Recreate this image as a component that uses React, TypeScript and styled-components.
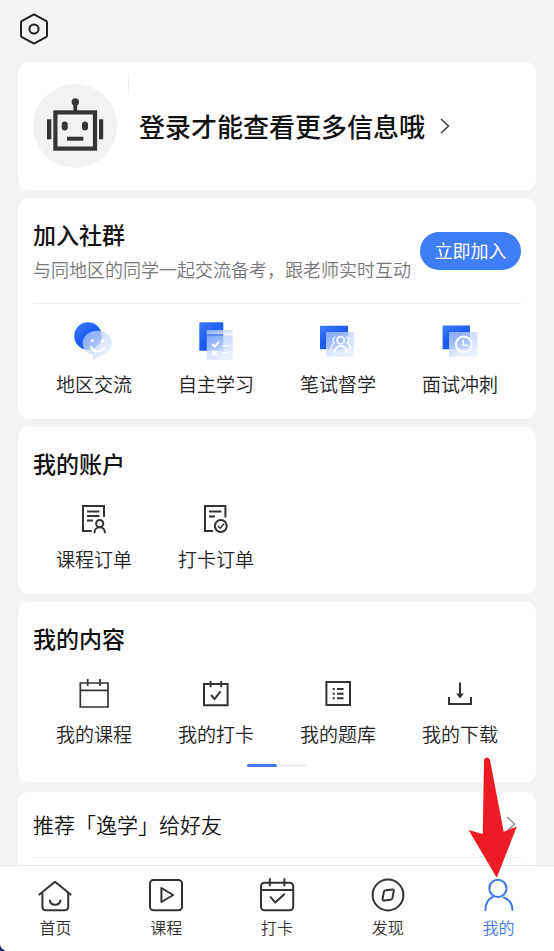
import React from "react";
import styled, { createGlobalStyle } from "styled-components";

const GlobalStyle = createGlobalStyle`
  * { box-sizing: border-box; }
  body {
    margin: 0;
    background: #16266e;
    font-family: "Noto Sans CJK SC", "Noto Sans", sans-serif;
    color: #333;
  }
  a { color: inherit; text-decoration: none; }
  h2, p { margin: 0; }
  svg { display: block; flex: none; }
`;

const Screen = styled.div`
  display: flex;
  flex-direction: column;
  height: 100vh;
  background: #f3f3f3;
  border-bottom-left-radius: 8px;
  overflow: hidden;
`;

const TopBar = styled.header`
  flex: none;
  padding: 12px 17px 16px;
`;

const IconButton = styled.button`
  display: block;
  padding: 0;
  border: 0;
  background: none;
  cursor: pointer;
`;

const Content = styled.main`
  flex: 1;
  min-height: 0;
  overflow: hidden;
  padding: 0 18px;
`;

const Card = styled.section<{ $top?: number; $bottom?: number }>`
  background: #fff;
  border-radius: 11px;
  padding: ${(p) => p.$top ?? 23}px 15px ${(p) => p.$bottom ?? 21}px;
  & + & { margin-top: 8px; }
`;

const ShareCard = styled(Card)`
  && { margin-top: 10px; }
`;

const Profile = styled.a`
  display: flex;
  align-items: center;
  height: 128px;
`;

const Avatar = styled.span`
  flex: none;
  width: 84px;
  height: 84px;
  border-radius: 50%;
  background: #f2f2f4;
`;

const Hairline = styled.span`
  align-self: flex-start;
  width: 1px;
  height: 18px;
  margin: 13px 10px 0 11px;
  background: #f1f1f1;
`;

const LoginText = styled.span`
  font-size: 26px;
  line-height: 36px;
  font-weight: 500;
  color: #111;
  margin-right: 14px;
  white-space: nowrap;
`;

const Title = styled.h2`
  && { margin-bottom: 3px; }
  font-size: 23px;
  line-height: 26px;
  font-weight: 500;
  color: #111;
`;

const GroupHead = styled.div`
  display: flex;
  align-items: center;
  justify-content: space-between;
  padding-bottom: 22px;
  border-bottom: 1px solid #efefef;
`;

const Subtitle = styled.p`
  && { margin-top: 10px; }
  font-size: 18px;
  line-height: 24px;
  font-weight: 350;
  color: #777;
  white-space: nowrap;
`;

const JoinButton = styled.button`
  flex: none;
  width: 101px;
  height: 38px;
  padding: 0 0 2px;
  border: 0;
  border-radius: 19px;
  background: #3d7df6;
  color: #fff;
  font-family: inherit;
  font-size: 18px;
  line-height: 24px;
  cursor: pointer;
`;

const Grid = styled.div`
  display: grid;
  grid-template-columns: repeat(4, 1fr);
`;

const GridArea = styled.div`
  padding-top: 18px;
`;

const Cell = styled.a`
  display: flex;
  flex-direction: column;
  align-items: center;
  gap: 4px;
  font-size: 19px;
  line-height: 28px;
  font-weight: 350;
  color: #222;
  white-space: nowrap;
`;

const Pager = styled.div`
  width: 60px;
  height: 3px;
  margin: 16px auto 0;
  border-radius: 2px;
  background: #f0f0f1;
`;

const PagerThumb = styled.div`
  width: 50%;
  height: 100%;
  border-radius: 2px;
  background: #4279e3;
`;

const ListRow = styled.a`
  display: flex;
  align-items: center;
  justify-content: space-between;
  height: 66px;
  padding: 0 4px 2px 0;
  border-bottom: 1px solid #efefef;
  font-size: 21px;
  font-weight: 350;
  color: #111;
`;

const TabBar = styled.nav`
  flex: none;
  display: grid;
  grid-template-columns: repeat(5, 1fr);
  border-top: 1px solid #e8e8e8;
  background: #fff;
`;

const Tab = styled.a<{ $active?: boolean }>`
  position: relative;
  display: flex;
  flex-direction: column;
  align-items: center;
  gap: 2px;
  padding: 9px 0 14px;
  font-size: 16px;
  line-height: 20px;
  font-weight: 350;
  color: ${(p) => (p.$active ? "#4079e8" : "#333")};
`;

const Pointer = styled.svg`
  position: absolute;
  bottom: 72px;
  left: calc(50% - 31px);
  pointer-events: none;
`;

const LineSvg = styled.svg`
  fill: none;
  stroke: currentColor;
  stroke-width: 2;
`;

const DefsSvg = styled.svg`
  position: absolute;
`;

type IconProps = { children: React.ReactNode };

const CellIcon = ({ children }: IconProps) => (
  <LineSvg width="44" height="44" viewBox="0 0 44 44" color="#333" aria-hidden="true">{children}</LineSvg>
);

const TabIcon = ({ children }: IconProps) => (
  <LineSvg width="40" height="40" viewBox="0 0 40 40" strokeLinecap="round" strokeLinejoin="round" aria-hidden="true">
    {children}
  </LineSvg>
);

const Chevron = ({ color }: { color: string }) => (
  <svg width="12" height="20" viewBox="0 0 12 20" fill="none" stroke={color} strokeWidth="1.6" aria-hidden="true">
    <path d="M2 3L9.5 10L2 17" />
  </svg>
);

const Gradients = () => (
  <DefsSvg width="0" height="0" aria-hidden="true">
    <defs>
      <linearGradient id="solid" x1="0" y1="0" x2="0.7" y2="1">
        <stop offset="0" stopColor="#3f7ffa" />
        <stop offset="0.5" stopColor="#1f5ff3" />
        <stop offset="1" stopColor="#0b50f4" />
      </linearGradient>
      <linearGradient id="glass" x1="0" y1="0" x2="0.9" y2="1">
        <stop offset="0" stopColor="#9dbcfb" stopOpacity="0.75" />
        <stop offset="0.5" stopColor="#cfdefc" stopOpacity="0.8" />
        <stop offset="1" stopColor="#edf3fe" stopOpacity="0.95" />
      </linearGradient>
      <linearGradient id="pane" x1="0" y1="0" x2="0.5" y2="1">
        <stop offset="0" stopColor="#b4cbfc" stopOpacity="0.65" />
        <stop offset="0.6" stopColor="#cdddfd" stopOpacity="0.85" />
        <stop offset="1" stopColor="#e8f0fe" />
      </linearGradient>
    </defs>
  </DefsSvg>
);

const groupItems = [
  {
    label: "地区交流",
    icon: (
      <>
        <circle cx="16" cy="14" r="13.8" fill="url(#solid)" stroke="none" />
        <path d="M25.3 8.7C33.6 8.7 40 14.2 40 21.2C40 28 34.6 32.8 27.8 33.6L21.2 38L20.6 33C14.6 31.2 10.7 26.9 10.7 21.2C10.7 14.2 17 8.7 25.3 8.7Z" fill="url(#glass)" stroke="none" />
        <circle cx="20.3" cy="18.6" r="1.6" fill="#fff" stroke="none" />
        <circle cx="30.8" cy="18.6" r="1.6" fill="#fff" stroke="none" />
        <path d="M19 25C21.2 30.2 29 31 32.2 26" stroke="#fff" strokeLinecap="round" />
      </>
    ),
  },
  {
    label: "自主学习",
    icon: (
      <>
        <rect x="5.3" y="0.2" width="24" height="28.6" rx="0.6" fill="url(#solid)" stroke="none" />
        <rect x="12.7" y="8" width="26" height="4.4" fill="url(#glass)" stroke="none" />
        <rect x="12.7" y="13.4" width="26" height="24.6" fill="url(#pane)" stroke="none" />
        <path d="M18.3 22L20.8 24.6L25.2 19.7M18.2 28.8L22.8 33.2M22.8 28.8L18.2 33.2" stroke="#fff" />
        <path d="M28.3 23.6H35M28.3 30.8H35" stroke="#fff" strokeWidth="1.4" />
      </>
    ),
  },
  {
    label: "笔试督学",
    icon: (
      <>
        <rect x="4" y="3.7" width="28" height="23.6" rx="0.6" fill="url(#solid)" stroke="none" />
        <rect x="10" y="10" width="28" height="24.7" fill="url(#pane)" stroke="none" />
        <g stroke="#fff" strokeWidth="1.7">
          <circle cx="24.7" cy="18.2" r="3.6" />
          <path d="M18.4 31C18.4 21.6 31 21.6 31 31" />
          <path d="M19.4 14.8C16.4 15.2 16.2 19.6 18.4 21C16.2 22.2 15 24.6 15 28M30 14.8C33 15.2 33.2 19.6 31 21C33.2 22.2 34.4 24.6 34.4 28" strokeWidth="1.1" />
        </g>
      </>
    ),
  },
  {
    label: "面试冲刺",
    icon: (
      <>
        <rect x="4.6" y="3.4" width="27.4" height="23.8" rx="0.6" fill="url(#solid)" stroke="none" />
        <rect x="11" y="10" width="28.4" height="24.7" fill="url(#pane)" stroke="none" />
        <circle cx="25.7" cy="22.4" r="7.8" stroke="#fff" />
        <path d="M25.2 17.6V23.2H29.6" stroke="#fff" strokeWidth="1.6" />
      </>
    ),
  },
];

const accountItems = [
  {
    label: "课程订单",
    icon: (
      <>
        <path d="M32 20V9H11V34H19.6M15 14.5H27.4M15 19H27.4M15 23.6H21" />
        <circle cx="27.7" cy="26.6" r="3.6" />
        <path d="M22.4 36.2C22.4 28.4 33 28.4 33 36.2" />
      </>
    ),
  },
  {
    label: "打卡订单",
    icon: (
      <>
        <path d="M31.4 20.6V9H11V34H19M15 14.6H27.4M15 19.4H21" />
        <circle cx="26.8" cy="29" r="5.9" />
        <path d="M23.8 29L26.2 31.2L30 26.8" strokeWidth="1.5" />
      </>
    ),
  },
];

const contentItems = [
  {
    label: "我的课程",
    icon: <path d="M8.3 11H36V35H8.3ZM8.3 18.4H36M15.7 7V14M28 7V14" strokeWidth="1.7" />,
  },
  {
    label: "我的打卡",
    icon: <path d="M10 12H33.6V33.2H10ZM16.6 9V15.2M27.2 9V15.2M17 23L20.6 27L26.6 19.4" />,
  },
  {
    label: "我的题库",
    icon: (
      <>
        <rect x="10.4" y="10" width="23.6" height="23" />
        <path d="M16.7 17H18.7M16.7 21.7H18.7M16.7 26.3H18.7M21 17H27.6M21 21.7H27.6M21 26.3H27.6" />
      </>
    ),
  },
  {
    label: "我的下载",
    icon: (
      <>
        <path d="M22 10.4V24M11 25V32H33V25" />
        <path d="M18.2 21.6H25.8L22 26.4Z" fill="currentColor" stroke="none" />
      </>
    ),
  },
];

const tabs = [
  {
    label: "首页",
    icon: <path d="M4.4 19.6L20 6.8L35.6 19.6M7.4 17.6V31.4Q7.4 35.2 11.2 35.2H29.4Q33.2 35.2 33.2 31.4V17.6M14.8 25.4C15.6 31.2 24.6 31.2 25.4 25.4" />,
  },
  {
    label: "课程",
    icon: (
      <>
        <rect x="4" y="5" width="32" height="30.2" rx="3.5" />
        <path d="M15.4 13V27L27.2 20Z" />
      </>
    ),
  },
  {
    label: "打卡",
    icon: (
      <>
        <rect x="4" y="7.8" width="32.2" height="27.4" rx="3.5" />
        <path d="M4 15H36M12.8 4V10.5M27.4 4V10.5M13.6 22.2L18.2 27.4L27 19.4" />
      </>
    ),
  },
  {
    label: "发现",
    icon: (
      <>
        <circle cx="20" cy="20" r="15.4" />
        <path d="M17.8 15.2L24.6 14.6Q26 14.6 25.8 16L24.4 23Q24 24.6 22.6 24.8L15.8 25.4Q14.4 25.4 14.6 24L15.8 17Q16.2 15.4 17.8 15.2Z" />
      </>
    ),
  },
];

type Item = { label: string; icon: React.ReactNode };

const ItemGrid = ({ items }: { items: Item[] }) => (
  <Grid>
    {items.map((item) => (
      <Cell href="#" key={item.label}>
        <CellIcon>{item.icon}</CellIcon>
        {item.label}
      </Cell>
    ))}
  </Grid>
);

export default function App() {
  return (
    <Screen>
      <GlobalStyle />
      <Gradients />
      <TopBar>
        <IconButton aria-label="设置">
          <LineSvg width="34" height="34" viewBox="0 0 34 34" strokeLinejoin="round" color="#222">
            <path d="M17 2.4L29 8.8Q30 9.4 30 10.4V23.6Q30 24.6 29 25.2L17 31.6L5 25.2Q4 24.6 4 23.6V10.4Q4 9.4 5 8.8Z" />
            <circle cx="17" cy="17" r="4.6" />
          </LineSvg>
        </IconButton>
      </TopBar>
      <Content>
        <Card $top={0} $bottom={0}>
          <Profile href="#">
            <Avatar>
              <svg width="84" height="84" viewBox="0 0 84 84" fill="#353535" aria-hidden="true">
                <circle cx="42.3" cy="18" r="3.7" />
                <rect x="40.4" y="18" width="3.8" height="10" />
                <rect x="22.4" y="28.4" width="39.6" height="36.2" fill="none" stroke="#353535" strokeWidth="4.2" />
                <rect x="14" y="35.3" width="4.3" height="20" />
                <rect x="66" y="35.3" width="4.2" height="20" />
                <rect x="28.7" y="37.4" width="6" height="9.2" rx="3" />
                <rect x="49" y="37.4" width="6" height="9.2" rx="3" />
                <rect x="34" y="52.7" width="16.3" height="4" />
              </svg>
            </Avatar>
            <Hairline />
            <LoginText>登录才能查看更多信息哦</LoginText>
            <Chevron color="#444" />
          </Profile>
        </Card>

        <Card>
          <GroupHead>
            <div>
              <Title>加入社群</Title>
              <Subtitle>与同地区的同学一起交流备考，跟老师实时互动</Subtitle>
            </div>
            <JoinButton>立即加入</JoinButton>
          </GroupHead>
          <GridArea>
            <ItemGrid items={groupItems} />
          </GridArea>
        </Card>

        <Card>
          <Title>我的账户</Title>
          <GridArea>
            <ItemGrid items={accountItems} />
          </GridArea>
        </Card>

        <Card $bottom={15}>
          <Title>我的内容</Title>
          <GridArea>
            <ItemGrid items={contentItems} />
          </GridArea>
          <Pager>
            <PagerThumb />
          </Pager>
        </Card>

        <ShareCard $top={0}>
          <ListRow href="#">
            推荐「逸学」给好友
            <Chevron color="#999" />
          </ListRow>
        </ShareCard>
      </Content>

      <TabBar>
        {tabs.map((tab) => (
          <Tab href="#" key={tab.label}>
            <TabIcon>{tab.icon}</TabIcon>
            {tab.label}
          </Tab>
        ))}
        <Tab href="#" $active aria-current="page">
          <TabIcon>
            <circle cx="18.9" cy="13.4" r="8.6" />
            <path d="M6.4 35C6.4 28.6 9.6 23.6 14.4 21.6M24.8 22.6C30 24.4 33.4 29 33.4 35" />
          </TabIcon>
          我的
          <Pointer width="50" height="122" viewBox="0 0 50 122" aria-hidden="true">
            <path d="M16 3Q16.4 0.4 19 0.4Q21.4 0.4 22 3L35.7 74.7L48.8 69.6L28.7 120.8L0.6 73L14.7 77Z" fill="#ed1c24" />
          </Pointer>
        </Tab>
      </TabBar>
    </Screen>
  );
}
